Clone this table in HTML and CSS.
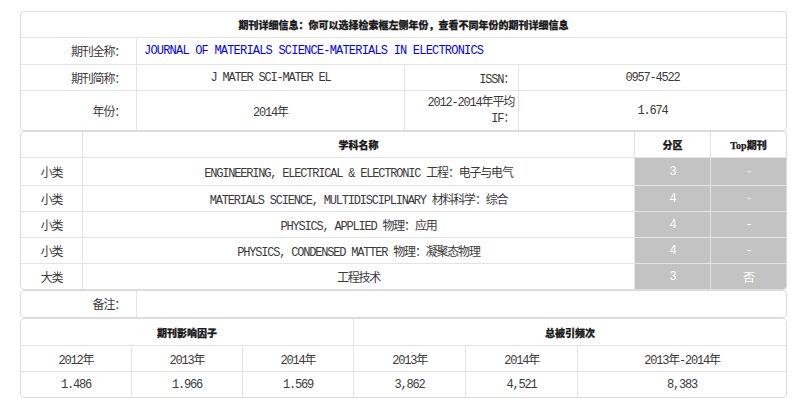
FILE: index.html
```html
<!DOCTYPE html>
<html lang="zh-CN">
<head>
<meta charset="utf-8">
<title>期刊详细信息</title>
<link rel="stylesheet" href="styles.css">
</head>
<body>
<div class="panel">
  <table class="blk info">
    <colgroup><col class="c115"><col class="c268"><col class="c114"><col class="c268"></colgroup>
    <tr class="h25"><th colspan="4" class="bold">期刊详细信息：你可以选择检索框左侧年份，查看不同年份的期刊详细信息</th></tr>
    <tr class="h27"><td class="lbl">期刊全称：</td><td colspan="3" class="title">JOURNAL OF MATERIALS SCIENCE-MATERIALS IN ELECTRONICS</td></tr>
    <tr class="h26"><td class="lbl">期刊简称：</td><td>J MATER SCI-MATER EL</td><td class="lbl2">ISSN：</td><td>0957-4522</td></tr>
    <tr class="h40"><td class="lbl">年份：</td><td>2014年</td><td class="lbl2 lh">2012-2014年平均 IF：</td><td>1.674</td></tr>
  </table>

  <table class="blk subj">
    <colgroup><col class="c61"><col class="c552"><col class="c76"><col class="c76b"></colgroup>
    <tr class="h25"><th></th><th class="bold">学科名称</th><th class="bold">分区</th><th class="bold top">Top期刊</th></tr>
    <tr class="h28"><td>小类</td><td>ENGINEERING, ELECTRICAL &amp; ELECTRONIC 工程：电子与电气</td><td class="gray">3</td><td class="gray">-</td></tr>
    <tr class="h26"><td>小类</td><td>MATERIALS SCIENCE, MULTIDISCIPLINARY 材料科学：综合</td><td class="gray">4</td><td class="gray">-</td></tr>
    <tr class="h26"><td>小类</td><td>PHYSICS, APPLIED 物理：应用</td><td class="gray">4</td><td class="gray">-</td></tr>
    <tr class="h26"><td>小类</td><td>PHYSICS, CONDENSED MATTER 物理：凝聚态物理</td><td class="gray">4</td><td class="gray">-</td></tr>
    <tr class="h26 last"><td>大类</td><td>工程技术</td><td class="gray">3</td><td class="gray">否</td></tr>
  </table>

  <table class="blk note">
    <colgroup><col class="c115"><col class="c650"></colgroup>
    <tr class="h26"><td class="lbl">备注：</td><td></td></tr>
  </table>

  <table class="blk stats">
    <colgroup><col class="c110"><col class="c111"><col class="c111"><col class="c112"><col class="c112"><col class="c209"></colgroup>
    <tr class="h26"><th colspan="3" class="bold">期刊影响因子</th><th colspan="3" class="bold">总被引频次</th></tr>
    <tr class="h26"><td>2012年</td><td>2013年</td><td>2014年</td><td>2013年</td><td>2014年</td><td>2013年-2014年</td></tr>
    <tr class="h26"><td>1.486</td><td>1.966</td><td>1.569</td><td>3,862</td><td>4,521</td><td>8,383</td></tr>
  </table>
</div>
</body>
</html>
```
FILE: styles.css
```css
html, body {
  margin: 0;
  padding: 0;
  background: #ffffff;
}

.panel {
  width: 765px;
  margin: 11px 0 0 20px;
  display: flex;
  flex-direction: column;
}

.blk {
  width: 765px;
  table-layout: fixed;
  border-collapse: separate;
  border-spacing: 0;
  border: 1px solid #dcdcdc;
  border-radius: 4px;
  font-family: "Liberation Mono", "Noto Sans CJK SC", monospace;
  font-size: 12px;
  letter-spacing: -1.2px;
  color: #3a3a3a;
}

.blk th, .blk td {
  padding: 0 4px;
  text-align: center;
  vertical-align: middle;
  border-left: 1px solid #e4e4e4;
  border-top: 1px solid #e4e4e4;
  font-weight: normal;
  white-space: normal;
}

.blk tr > :first-child { border-left: none; }
.blk tr:first-child > * { border-top: none; }

.c115 { width: 115px; }
.c268 { width: 268px; }
.c114 { width: 114px; }
.c61 { width: 61px; }
.c552 { width: 552px; }
.c76 { width: 76px; }
.c76b { width: 76px; }
.c650 { width: 650px; }
.c110 { width: 110px; }
.c111 { width: 111px; }
.c112 { width: 112px; }
.c209 { width: 209px; }

.h25 { height: 25px; }
.h26 { height: 26px; }
.h27 { height: 27px; }
.h28 { height: 28px; }
.h40 { height: 40px; }

.bold {
  font-family: "Noto Sans CJK SC", "Liberation Serif", sans-serif;
  font-weight: 900 !important;
  font-size: 10px;
  letter-spacing: 0;
  color: #1a1a1a;
  -webkit-text-stroke: 0.25px #1a1a1a;
}

.top {
  font-family: "Liberation Serif", "Noto Sans CJK SC", serif;
}

.lbl {
  text-align: right !important;
  padding-right: 11px !important;
}

.lbl2 {
  text-align: right !important;
  padding-right: 4px !important;
}

.lh { line-height: 16px; }

.title {
  text-align: left !important;
  padding-left: 7px !important;
  color: #0000ff;
  font-weight: bold;
  letter-spacing: -0.8px;
}

.gray {
  background: #c3c3c3;
  color: #ffffff;
}

.subj tr.last .gray:last-child {
  border-bottom-right-radius: 3px;
}
```
